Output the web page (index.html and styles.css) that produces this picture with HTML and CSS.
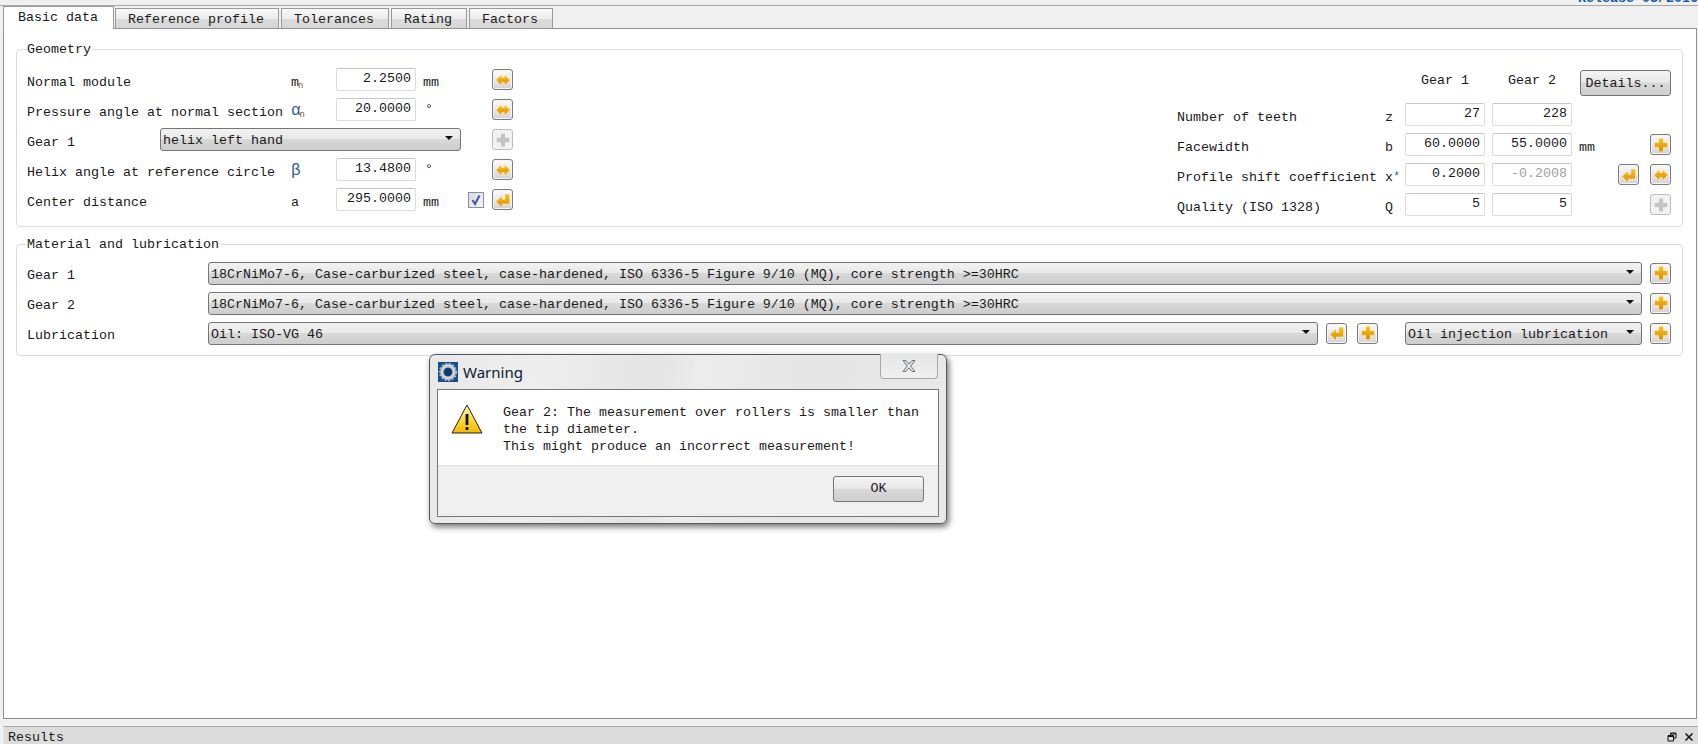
FILE: index.html
```html
<!DOCTYPE html>
<html lang="en">
<head>
<meta charset="utf-8">
<title>Basic data</title>
<link rel="stylesheet" href="styles.css">
</head>
<body>
<svg class="defs" aria-hidden="true">
  <defs>
    <linearGradient id="gold" x1="0" y1="0" x2="0" y2="1">
      <stop offset="0" stop-color="#fcc419"/>
      <stop offset="1" stop-color="#e08e00"/>
    </linearGradient>
    <symbol id="i-both" viewBox="0 0 15 15"><path d="M1 7.5 6 2.5V5.5H9V2.5L14 7.5 9 12.5V9.5H6V12.5Z" stroke="#fff" stroke-width=".8" paint-order="stroke"/></symbol>
    <symbol id="i-ret" viewBox="0 0 15 15"><path d="M1 9 6.5 4V7H9.5V2H13.5V11H6.5V14Z" stroke="#fff" stroke-width=".8" paint-order="stroke"/></symbol>
    <symbol id="i-plus" viewBox="0 0 15 15"><path d="M5.5 1.5H9.5V5.5H13.5V9.5H9.5V13.5H5.5V9.5H1.5V5.5H5.5Z" stroke="#fff" stroke-width=".8" paint-order="stroke"/></symbol>
  </defs>
</svg>

<div class="topstrip"><span class="release">Release 03/2016</span></div>

<div class="tabs">
  <div class="tab active">Basic data</div>
  <div class="tab">Reference profile</div>
  <div class="tab">Tolerances</div>
  <div class="tab">Rating</div>
  <div class="tab">Factors</div>
</div>

<main class="pane">
  <fieldset class="group">
    <legend>Geometry</legend>
    <div class="geometry">
      <div class="geo-left">
        <span class="lbl span-label">Normal module</span>
        <span class="sym c-sym">m<sub>n</sub></span>
        <input class="num c-in" value="2.2500" readonly>
        <span class="unit c-unit">mm</span>
        <button class="ibtn c-btn"><svg><use href="#i-both"/></svg></button>

        <span class="lbl span-label">Pressure angle at normal section</span>
        <span class="sym c-sym greek">α<sub>n</sub></span>
        <input class="num c-in" value="20.0000" readonly>
        <span class="unit c-unit deg">°</span>
        <button class="ibtn c-btn"><svg><use href="#i-both"/></svg></button>

        <span class="lbl c-a">Gear 1</span>
        <div class="combo c-combo">helix left hand</div>
        <button class="ibtn off c-btn"><svg><use href="#i-plus"/></svg></button>

        <span class="lbl span-label">Helix angle at reference circle</span>
        <span class="sym c-sym greek">β</span>
        <input class="num c-in" value="13.4800" readonly>
        <span class="unit c-unit deg">°</span>
        <button class="ibtn c-btn"><svg><use href="#i-both"/></svg></button>

        <span class="lbl span-label">Center distance</span>
        <span class="sym c-sym">a</span>
        <input class="num c-in" value="295.0000" readonly>
        <span class="unit c-unit">mm</span>
        <span class="check c-check"><svg viewBox="0 0 14 14"><path d="M3.5 7 6 11 10.5 2.5" fill="none" stroke="#3b5a9e" stroke-width="2"/></svg></span>
        <button class="ibtn c-btn"><svg><use href="#i-ret"/></svg></button>
      </div>

      <div class="geo-right">
        <span class="head h1">Gear 1</span>
        <span class="head h2">Gear 2</span>
        <button class="details">Details...</button>

        <span class="lbl r-label rw2">Number of teeth</span>
        <span class="sym r-sym rw2">z</span>
        <input class="num r-g1 rw2" value="27" readonly>
        <input class="num r-g2 rw2" value="228" readonly>

        <span class="lbl r-label rw3">Facewidth</span>
        <span class="sym r-sym rw3">b</span>
        <input class="num r-g1 rw3" value="60.0000" readonly>
        <input class="num r-g2 rw3" value="55.0000" readonly>
        <span class="unit r-unit rw3">mm</span>
        <button class="ibtn r-b2 rw3"><svg><use href="#i-plus"/></svg></button>

        <span class="lbl r-label rw4">Profile shift coefficient</span>
        <span class="sym r-sym rw4">x<sup>*</sup></span>
        <input class="num r-g1 rw4" value="0.2000" readonly>
        <input class="num r-g2 dim rw4" value="-0.2008" readonly>
        <button class="ibtn r-b1 rw4"><svg><use href="#i-ret"/></svg></button>
        <button class="ibtn r-b2 rw4"><svg><use href="#i-both"/></svg></button>

        <span class="lbl r-label rw5">Quality (ISO 1328)</span>
        <span class="sym r-sym rw5">Q</span>
        <input class="num r-g1 rw5" value="5" readonly>
        <input class="num r-g2 rw5" value="5" readonly>
        <button class="ibtn off r-b2 rw5"><svg><use href="#i-plus"/></svg></button>
      </div>
    </div>
  </fieldset>

  <fieldset class="group second">
    <legend>Material and lubrication</legend>
    <div class="material">
      <span class="lbl">Gear 1</span>
      <div class="combo m-wide">18CrNiMo7-6, Case-carburized steel, case-hardened, ISO 6336-5 Figure 9/10 (MQ), core strength &gt;=30HRC</div>
      <button class="ibtn m-last"><svg><use href="#i-plus"/></svg></button>

      <span class="lbl">Gear 2</span>
      <div class="combo m-wide">18CrNiMo7-6, Case-carburized steel, case-hardened, ISO 6336-5 Figure 9/10 (MQ), core strength &gt;=30HRC</div>
      <button class="ibtn m-last"><svg><use href="#i-plus"/></svg></button>

      <span class="lbl">Lubrication</span>
      <div class="combo">Oil: ISO-VG 46</div>
      <button class="ibtn m-b1"><svg><use href="#i-ret"/></svg></button>
      <button class="ibtn m-b2"><svg><use href="#i-plus"/></svg></button>
      <div class="combo m-oil">Oil injection lubrication</div>
      <button class="ibtn m-last"><svg><use href="#i-plus"/></svg></button>
    </div>
  </fieldset>
</main>

<footer class="results">
  <span class="results-title">Results</span>
  <span class="results-icons">
    <svg viewBox="0 0 10 10"><path d="M3.5 1H9V6H7M1 3.5H6.5V9H1Z M3.5 1V3.5 M1 4.5H6.5 M3.5 2H9" fill="none" stroke="#111" stroke-width="1"/></svg>
    <svg viewBox="0 0 10 10"><path d="M1.5 1.5 8.5 8.5M8.5 1.5 1.5 8.5" fill="none" stroke="#111" stroke-width="1.5"/></svg>
  </span>
</footer>

<section class="dialog">
  <header class="dlg-title">
    <svg class="dlg-icon" viewBox="0 0 20 20">
      <rect width="20" height="20" fill="#134f8c"/>
      <circle cx="10" cy="10" r="6.2" fill="none" stroke="#d2d2d2" stroke-width="3.4"/>
      <circle cx="10" cy="10" r="8.3" fill="none" stroke="#b5b5b5" stroke-width="1.8" stroke-dasharray="2 1.6"/>
      <circle cx="10" cy="10" r="3.6" fill="#0d3a69"/>
    </svg>
    <span class="dlg-caption">Warning</span>
    <span class="dlg-close"><svg viewBox="0 0 16 14"><path d="M2 1.5H5L8 5 11 1.5H14L9.8 7 14 12.5H11L8 9 5 12.5H2L6.2 7Z" fill="#dfe3e8" stroke="#6d7278" stroke-width="1"/></svg></span>
  </header>
  <div class="dlg-panel">
    <div class="dlg-body">
      <svg class="dlg-warn" viewBox="0 0 32 30">
        <defs><linearGradient id="amber" x1="0" y1="0" x2="0" y2="1"><stop offset="0" stop-color="#fff6c0"/><stop offset=".55" stop-color="#fcd93a"/><stop offset="1" stop-color="#f5b800"/></linearGradient></defs>
        <path d="M16 1 31 29H1Z" fill="url(#amber)" stroke="#222" stroke-width="1" stroke-linejoin="round"/>
        <rect x="14.6" y="10" width="2.8" height="11" fill="#111"/>
        <rect x="14.6" y="23" width="2.8" height="3" fill="#111"/>
      </svg>
      <p class="dlg-text">Gear 2: The measurement over rollers is smaller than the tip diameter.<br>This might produce an incorrect measurement!</p>
    </div>
    <div class="dlg-foot"><button class="okbtn">OK</button></div>
  </div>
</section>
</body>
</html>
```
FILE: styles.css
```css
* { box-sizing: border-box; }
html, body { margin: 0; height: 744px; overflow: hidden; }
body {
  background: #f0f0f0;
  color: #1a1a1a;
  font: 13.33px/16px "Liberation Mono", monospace;
  display: flex;
  flex-direction: column;
  position: relative;
}
.defs { position: absolute; width: 0; height: 0; }

.topstrip {
  height: 6px;
  flex: none;
  border-bottom: 1px solid #a8a8a8;
  overflow: hidden;
  display: flex;
  justify-content: flex-end;
  align-items: flex-end;
}
.release { color: #0b5aa6; line-height: 12px; flex: none; font-weight: bold; }

.tabs { display: flex; align-items: flex-end; gap: 2px; height: 22px; padding-left: 3px; flex: none; }
.tab {
  height: 20px;
  padding: 0 14px 0 12px;
  line-height: 22px;
  border: 1px solid #9a9a9a;
  border-bottom: 0;
  background: linear-gradient(#f8f8f8, #ececec 50%, #dcdcdc 52%, #d6d6d6);
  white-space: nowrap;
}
.tab.active {
  height: 23px;
  margin-bottom: -1px;
  padding: 0 15px 0 14px;
  line-height: 21px;
  background: #fff;
  position: relative;
  z-index: 1;
  margin-right: -1px;
}

.pane {
  flex: none;
  height: 691px;
  margin: 0 1px 0 3px;
  border: 1px solid #8f8f96;
  background: #fff;
  padding: 12px 13px 0 12px;
}
.group {
  margin: 0;
  min-width: 0;
  border: 1px solid #d5dde6;
  border-radius: 4px;
  padding: 7.5px 11px 6px 10px;
}
.group legend { padding: 0 2px 0 0; margin-left: 0; line-height: 18px; height: 16px; }
.group.second { margin-top: 9.5px; padding: 6px 11px 7px 10px; }

.geometry { display: flex; justify-content: space-between; align-items: flex-start; }

.geo-left {
  display: grid;
  grid-template-columns: 133px 131px 45px 80px 45px 7px 16px 8px 21px;
  grid-auto-rows: 30px;
  align-items: center;
}
.span-label { grid-column: 1 / 3; }
.c-a { grid-column: 1; }
.c-combo { grid-column: 2 / 6; }
.c-sym { grid-column: 3; }
.c-in { grid-column: 4; }
.c-unit { grid-column: 5; padding-left: 7px; }
.c-check { grid-column: 7; }
.c-btn { grid-column: 9; }

.geo-right {
  display: grid;
  grid-template-columns: 208px 20px 80px 7px 80px 7px 39px 21px 11px 21px;
  grid-template-rows: 35px repeat(4, 30px);
  align-items: center;
}
.rw2 { grid-row: 2; }
.rw3 { grid-row: 3; }
.rw4 { grid-row: 4; }
.rw5 { grid-row: 5; }
.head { grid-row: 1; text-align: center; align-self: start; margin-top: 8px; }
.h1 { grid-column: 3; }
.h2 { grid-column: 5; }
.details { grid-row: 1; grid-column: 6 / -1; justify-self: end; align-self: start; margin-top: 5px; }
.r-label { grid-column: 1; white-space: nowrap; }
.r-sym { grid-column: 2; }
.r-g1 { grid-column: 3; }
.r-g2 { grid-column: 5; }
.r-unit { grid-column: 6 / 8; padding-left: 7px; }
.r-b1 { grid-column: 8; }
.r-b2 { grid-column: 10; }

.material {
  display: grid;
  grid-template-columns: 181px 1110px 8px 21px 10px 21px 27px 237px 8px 21px;
  grid-auto-rows: 30px;
  align-items: center;
}
.m-wide { grid-column: 2 / 9; }
.m-b1 { grid-column: 4; }
.m-b2 { grid-column: 6; }
.m-oil { grid-column: 8; }
.m-last { grid-column: 10; }

.lbl, .sym, .unit { white-space: nowrap; padding-top: 6px; }
.sym { color: #222; }
.sym sub { font-size: 9px; line-height: 0; color: #7a5a1a; vertical-align: -2px; margin-left: -1px; }
.sym sup { color: #3a6ea5; line-height: 0; font-size: 12px; vertical-align: 1px; }
.greek { color: #2a5c9a; font-size: 16px; line-height: 16px; padding-top: 2px; }
.unit.deg { padding-top: 0; padding-left: 9px; }

.num {
  display: block;
  width: 80px;
  height: 23px;
  padding: 0 4px 2px 0;
  margin: 0;
  border: 1px solid #dcdcdc;
  border-top-color: #c8c8c8;
  border-radius: 2px;
  background: #fff;
  color: #1a1a1a;
  font: inherit;
  text-align: right;
  outline: 0;
}
.num.dim { color: #a0a0a0; }

.combo {
  position: relative;
  height: 23px;
  line-height: 24px;
  padding: 0 20px 0 2px;
  border: 1px solid #757575;
  border-radius: 3px;
  background: linear-gradient(#f2f2f2, #e8e8e8 47%, #d8d8d8 50%, #cdcdcd);
  white-space: nowrap;
  overflow: hidden;
}
.combo::after {
  content: "";
  position: absolute;
  right: 7px;
  top: 7px;
  border-left: 4px solid transparent;
  border-right: 4px solid transparent;
  border-top: 4px solid #111;
}

.ibtn {
  width: 21px;
  height: 21px;
  padding: 0;
  border: 1px solid #7c7c7c;
  border-radius: 3px;
  background: linear-gradient(#fbfbfb, #e8e8e8 50%, #d2d2d2);
  box-shadow: inset 0 0 0 1px #f4f4f4;
  display: flex;
  align-items: center;
  justify-content: center;
}
.ibtn svg { width: 16px; height: 16px; fill: url(#gold); }
.ibtn.off { border-color: #bcbcbc; background: #f2f2f2; box-shadow: none; }
.ibtn.off svg { fill: #c4c4c4; }

.check {
  width: 16px;
  height: 16px;
  border: 1px solid #8d8d96;
  background: linear-gradient(135deg, #d8dbe2, #f4f5f8);
  display: block;
}
.check svg { display: block; width: 14px; height: 14px; }

.details {
  width: 91px;
  height: 26px;
  padding: 2px 0 0;
  border: 1px solid #757575;
  border-radius: 3px;
  background: linear-gradient(#f4f4f4, #e8e8e8 47%, #d8d8d8 50%, #cfcfcf);
  color: #1a1a1a;
  font: inherit;
}

.results {
  flex: none;
  height: 18px;
  margin: 7px 0 0 3px;
  border-top: 1px solid #aaa;
  border-left: 1px solid #e8e8e8;
  background: #dcdcdc;
  display: flex;
  justify-content: space-between;
  align-items: flex-start;
  padding-left: 4px;
  overflow: hidden;
}
.results-title { line-height: 22px; }
.results-icons { display: flex; gap: 7px; padding: 5px 4px 0 0; }
.results-icons svg { width: 10px; height: 10px; display: block; }

.dialog {
  position: absolute;
  left: 429px;
  top: 354px;
  width: 518px;
  height: 170px;
  padding: 0 7px 6px;
  display: flex;
  flex-direction: column;
  border: 1px solid #55585c;
  border-radius: 6px;
  background: linear-gradient(100deg, #e8e8e8 0, #eeeeee 20%, #e4e4e4 42%, #ececec 50%, #e6e6e6 70%, #e9e9e9 100%);
  box-shadow: 2px 3px 6px rgba(0, 0, 0, .55);
  z-index: 5;
}
.dlg-title { position: relative; height: 34px; flex: none; display: flex; align-items: center; padding: 0 0 0 1px; gap: 5px; }
.dlg-icon { width: 20px; height: 20px; display: block; flex: none; }
.dlg-caption { font: 15px/20px "Noto Sans", sans-serif; color: #0b1a33; }
.dlg-close {
  position: absolute;
  right: 1px;
  top: -1px;
  width: 58px;
  height: 25px;
  border: 1px solid #a8a8a8;
  border-top: 0;
  border-radius: 0 0 4px 4px;
  background: linear-gradient(#e6e6e6, #f0f0f0);
  display: flex;
  align-items: center;
  justify-content: center;
}
.dlg-close svg { width: 16px; height: 14px; display: block; }
.dlg-panel { flex: 1; border: 1px solid #777; display: flex; flex-direction: column; background: #f0f0f0; }
.dlg-body {
  height: 76px;
  flex: none;
  background: #fff;
  border-bottom: 1px solid #dfdfdf;
  display: grid;
  grid-template-columns: 65px 1fr;
  padding-top: 14px;
}
.dlg-warn { width: 32px; height: 30px; display: block; margin-left: 13px; }
.dlg-text { margin: 0; width: 432px; line-height: 17px; }
.dlg-foot { flex: 1; display: flex; justify-content: flex-end; align-items: flex-start; padding: 10px 14px 0 0; }
.okbtn {
  width: 91px;
  height: 26px;
  padding: 0;
  border: 1px solid #757575;
  border-radius: 3px;
  background: linear-gradient(#f4f4f4, #e8e8e8 47%, #d8d8d8 50%, #cfcfcf);
  color: #1a1a1a;
  font: inherit;
}
```
